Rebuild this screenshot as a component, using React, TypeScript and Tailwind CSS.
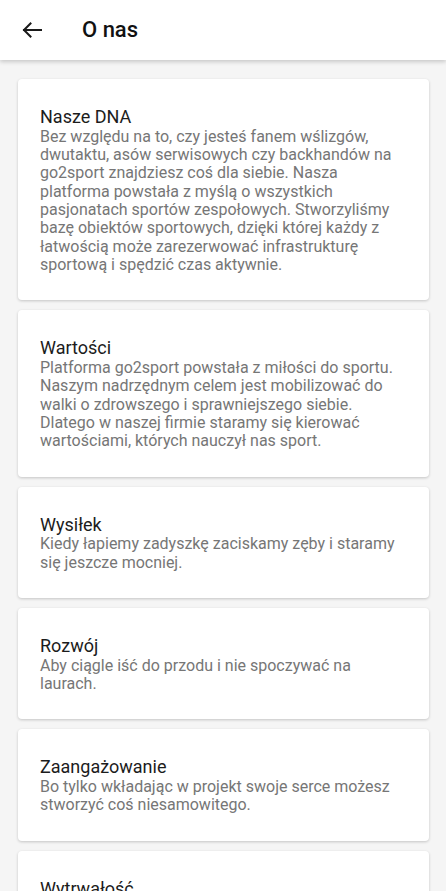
const sections = [
  {
    title: "Nasze DNA",
    text: "Bez względu na to, czy jesteś fanem wślizgów, dwutaktu, asów serwisowych czy backhandów na go2sport znajdziesz coś dla siebie. Nasza platforma powstała z myślą o wszystkich pasjonatach sportów zespołowych. Stworzyliśmy bazę obiektów sportowych, dzięki której każdy z łatwością może zarezerwować infrastrukturę sportową i spędzić czas aktywnie.",
  },
  {
    title: "Wartości",
    text: "Platforma go2sport powstała z miłości do sportu. Naszym nadrzędnym celem jest mobilizować do walki o zdrowszego i sprawniejszego siebie. Dlatego w naszej firmie staramy się kierować wartościami, których nauczył nas sport.",
  },
  {
    title: "Wysiłek",
    text: "Kiedy łapiemy zadyszkę zaciskamy zęby i staramy się jeszcze mocniej.",
  },
  {
    title: "Rozwój",
    text: "Aby ciągle iść do przodu i nie spoczywać na laurach.",
  },
  {
    title: "Zaangażowanie",
    text: "Bo tylko wkładając w projekt swoje serce możesz stworzyć coś niesamowitego.",
  },
  {
    title: "Wytrwałość",
    text: "Bo tylko dzięki wytrwałości możemy osiągnąć zamierzone cele.",
  },
];

function BackArrow() {
  return (
    <svg width="20" height="16" viewBox="0 0 20 16" fill="none" stroke="#1a1a1a" strokeWidth="2" strokeLinecap="square">
      <path d="M2 8h17" />
      <path d="M8.5 1.5L2 8l6.5 6.5" />
    </svg>
  );
}

export default function App() {
  return (
    <div className="h-[891px] overflow-hidden bg-[#f5f5f5] font-['Roboto',sans-serif]">
      <header className="relative z-10 flex h-[60px] items-center bg-white shadow-[0_2px_4px_rgba(0,0,0,0.18)]">
        <div className="flex w-[82px] justify-start pl-[22px]">
          <BackArrow />
        </div>
        <h1 className="text-[22px] font-medium leading-none text-[#111]">O nas</h1>
      </header>
      <main className="flex flex-col gap-[10px] pl-[18px] pr-[17px] pt-[19px]">
        {sections.map((s) => (
          <section
            key={s.title}
            className="rounded-[4px] bg-white pb-[26px] pl-[22px] pr-[20px] pt-[27px] shadow-[0_1px_3px_rgba(0,0,0,0.2)]"
          >
            <h2 className="text-[18px] leading-[21.6px] text-[#1c1c1c]">{s.title}</h2>
            <p className="text-[16px] leading-[18.35px] text-[#767676]">{s.text}</p>
          </section>
        ))}
      </main>
    </div>
  );
}
